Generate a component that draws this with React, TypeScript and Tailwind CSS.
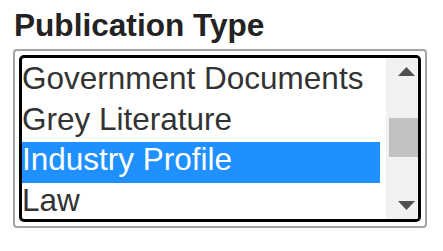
import React from "react";

const items = [
  { label: "Government Documents", selected: false },
  { label: "Grey Literature", selected: false },
  { label: "Industry Profile", selected: true },
  { label: "Law", selected: false },
];

export default function App() {
  return (
    <div className="w-[443px] h-[251px] bg-white font-['Liberation_Sans',Arial,sans-serif]">
      <div className="pt-[7px] pl-[14px] text-[31.6px] leading-[36px] font-bold text-[#232323]">
        Publication Type
      </div>
      <div className="ml-[13px] mt-[6px] w-[414px] h-[179px] border-2 border-[#a3a3a3] rounded-[4px] p-[4px]">
        <div className="h-full border-[3px] border-black rounded-[5px] flex overflow-hidden">
          <div className="flex-1 pt-[3px] pr-[6px] overflow-hidden">
            {items.map((it) => (
              <div
                key={it.label}
                className={
                  it.selected
                    ? "h-[40.67px] leading-[34.2px] text-[31.5px] whitespace-nowrap bg-[#1e90ff] text-white"
                    : "h-[40.67px] leading-[34.2px] text-[31.5px] whitespace-nowrap text-[#333333]"
                }
              >
                {it.label}
              </div>
            ))}
          </div>
          <div className="w-[32px] bg-[#f1f1f1] relative flex flex-col justify-between items-center pt-[9px] pb-[9px] pl-[8px]">
            <svg width="17" height="9" viewBox="0 0 17 9">
              <polygon points="8.5,0 17,9 0,9" fill="#505050" />
            </svg>
            <div className="absolute left-[3px] right-0 top-[60px] h-[39px] bg-[#c1c1c1]" />
            <svg width="17" height="9" viewBox="0 0 17 9">
              <polygon points="0,0 17,0 8.5,9" fill="#505050" />
            </svg>
          </div>
        </div>
      </div>
    </div>
  );
}
